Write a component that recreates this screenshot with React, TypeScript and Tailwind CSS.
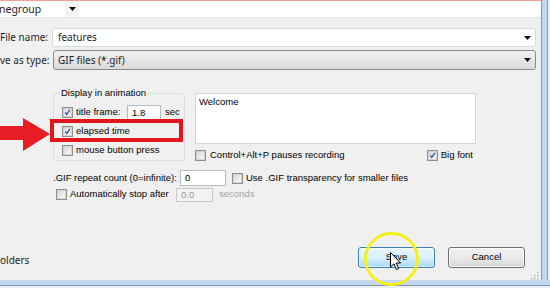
import React from 'react';

const Arrow = () => (
    <svg width="7" height="4" viewBox="0 0 7 4" className="shrink-0">
        <polygon points="0,0 7,0 3.5,4" fill="#111" />
    </svg>
);

const Check = ({ checked }: { checked?: boolean }) => (
    <span className="w-[11px] h-[11px] shrink-0 border border-[#8e8f8f] bg-[#f6f6f6] flex items-center justify-center">
        <span className="w-[9px] h-[9px] border border-[#d2d2d2] bg-gradient-to-br from-[#d9d9d9] to-[#f7f7f7] flex items-center justify-center">
            {checked && (
                <svg width="9" height="9" viewBox="0 0 9 9">
                    <path d="M1.6 4.4 L3.6 7 L7.6 1.2" fill="none" stroke="#2c4fa0" strokeWidth="1.5" />
                </svg>
            )}
        </span>
    </span>
);

const App: React.FC = () => {
    return (
        <div
            className="relative w-[550px] h-[288px] overflow-hidden bg-[#f0f0f0] flex flex-col text-black"
            style={{ fontFamily: '"Liberation Sans", Arial, sans-serif' }}
        >
            <div className="flex flex-1 min-h-0">
                <div className="flex-1 flex flex-col">
                    <div className="h-px bg-[#f0a292]" />
                    {/* address strip */}
                    <div className="h-[17px] bg-white border-b border-[#e6e6e6] flex font-['Noto_Sans',sans-serif] text-[10.5px] text-[#1e1e1e]">
                        <div className="w-[67px] leading-[16px] -ml-[1px]">negroup</div>
                        <div className="w-[12px] bg-[#f6f6f6] border-x border-[#ececec] flex items-center justify-center">
                            <Arrow />
                        </div>
                    </div>

                    {/* file name */}
                    <div className="mt-[10px] h-[19px] flex items-center font-['Noto_Sans',sans-serif] text-[10px] text-[#1e1e1e]">
                        <div className="w-[52px] pr-[4px] text-right whitespace-nowrap">File name:</div>
                        <div className="w-[484px] h-full bg-white border border-[#d9d9d9] rounded-[2px] flex items-center pl-[5px] pr-[4px]">
                            <span>features</span>
                            <span className="ml-auto"><Arrow /></span>
                        </div>
                    </div>

                    {/* save as type */}
                    <div className="mt-[3px] h-[20px] flex items-center font-['Noto_Sans',sans-serif] text-[10px] text-[#1e1e1e]">
                        <div className="w-[53px] pr-[5px] text-right whitespace-nowrap">ve as type:</div>
                        <div className="w-[483px] h-full border border-[#8a8a8a] rounded-[3px] bg-gradient-to-b from-[#f3f3f3] to-[#dadada] flex items-center pl-[4px] pr-[4px]">
                            <span>GIF files (*.gif)</span>
                            <span className="ml-auto"><Arrow /></span>
                        </div>
                    </div>

                    {/* options */}
                    <div className="mt-[17px] pl-[53px] flex items-start text-[9.5px]">
                        <fieldset className="w-[132px] border border-[#d5dfe5] rounded-[3px] pl-[8px]">
                            <legend className="ml-[-2px] px-[1px] leading-[12px]">Display in animation</legend>
                            <div className="mt-[4px] h-[19px] flex items-center">
                                <Check checked />
                                <span className="ml-[3px] w-[51px]">title frame:</span>
                                <div className="w-[34px] h-[15px] bg-white border border-[#b7bcc2] pl-[4px] leading-[13px]">1.8</div>
                                <span className="ml-[4px]">sec</span>
                            </div>
                            <div className="h-[19px] flex items-center">
                                <Check checked />
                                <span className="ml-[3px]">elapsed time</span>
                            </div>
                            <div className="h-[19px] flex items-center">
                                <Check />
                                <span className="ml-[3px]">mouse button press</span>
                            </div>
                        </fieldset>

                        <div className="ml-[10px] mt-[6px] w-[281px] flex flex-col">
                            <div className="h-[51px] bg-white border border-[#d3d7dc] pl-[3px] pt-[2px] leading-[12px]">Welcome</div>
                            <div className="mt-[6px] h-[11px] flex items-center justify-between">
                                <div className="flex items-center">
                                    <Check />
                                    <span className="ml-[4px]">Control+Alt+P pauses recording</span>
                                </div>
                                <div className="flex items-center pr-[3px]">
                                    <Check checked />
                                    <span className="ml-[3px]">Big font</span>
                                </div>
                            </div>
                        </div>
                    </div>

                    <div className="mt-[9px] pl-[53px] h-[16px] flex items-center text-[9.5px]">
                        <span className="w-[127px] whitespace-nowrap">.GIF repeat count (0=infinite):</span>
                        <div className="w-[46px] h-[16px] bg-white border border-[#b7bcc2] pl-[4px] leading-[14px]">0</div>
                        <span className="ml-[6px]"><Check /></span>
                        <span className="ml-[3px] whitespace-nowrap">Use .GIF transparency for smaller files</span>
                    </div>

                    <div className="mt-[1px] pl-[56px] h-[15px] flex items-center text-[9.5px]">
                        <Check />
                        <span className="ml-[3px] w-[106px] whitespace-nowrap">Automatically stop after</span>
                        <div className="w-[37px] h-[14px] bg-[#f3f3f3] border border-[#c9c9c9] pl-[4px] leading-[12px] text-[#9a9a9a]">0.0</div>
                        <span className="ml-[6px] text-[#a3a3a3]">seconds</span>
                    </div>

                    <div className="flex-1" />

                    {/* buttons */}
                    <div className="mb-[12px] h-[21px] flex items-center">
                        <span className="mt-[5px] font-['Noto_Sans',sans-serif] text-[10px] text-[#1e1e1e]">olders</span>
                        <div className="ml-auto mr-[16px] flex gap-[13px] text-[9.5px]">
                            <button className="w-[77px] h-[21px] rounded-[3px] border border-[#3c7fb1] bg-gradient-to-b from-[#eaf6fd] via-[#d9f0fc] to-[#a7d9f5] shadow-[inset_0_0_0_1px_rgba(255,255,255,0.6)]">
                                Save
                            </button>
                            <button className="w-[77px] h-[21px] rounded-[3px] border border-[#707070] bg-gradient-to-b from-[#f2f2f2] via-[#ebebeb] to-[#d6d6d6] shadow-[inset_0_0_0_1px_rgba(255,255,255,0.7)]">
                                Cancel
                            </button>
                        </div>
                    </div>
                </div>

                {/* right window frame */}
                <div className="w-[9px] flex">
                    <div className="w-px bg-[#7a98b8]" />
                    <div className="w-[5px] bg-[#c3d8ee]" />
                    <div className="w-px bg-[#8ea3ba]" />
                    <div className="w-[2px] bg-[#e9eef4]" />
                </div>
            </div>

            {/* bottom window frame */}
            <div className="h-[8px] flex flex-col">
                <div className="h-[5px] bg-[#c3d8ee]" />
                <div className="h-px bg-[#7f95ad]" />
                <div className="h-[2px] bg-[#e9eef4]" />
            </div>

            {/* resize grip */}
            <svg className="absolute left-[530px] top-[271px]" width="9" height="9" viewBox="0 0 9 9">
                {[[7, 1], [4, 4], [7, 4], [1, 7], [4, 7], [7, 7]].map(([x, y], i) => (
                    <rect key={i} x={x} y={y} width="1.5" height="1.5" fill="#b5b5b5" />
                ))}
            </svg>

            {/* annotation: red arrow + box */}
            <svg className="absolute left-0 top-[117px]" width="52" height="36" viewBox="0 0 52 36">
                <polygon points="0,9 23,9 23,1 50,17 23,34 23,23 0,23" fill="#e81c24" />
            </svg>
            <div className="absolute left-[50px] top-[119px] w-[133px] h-[23px] border-[4px] border-[#e4161d]" />

            {/* yellow highlight + cursor */}
            <div className="absolute left-[364px] top-[232px] w-[55px] h-[54px] rounded-full border-[3px] border-[#f5f018]" />
            <svg className="absolute left-[390px] top-[252px]" width="12" height="19" viewBox="0 0 12 19">
                <path d="M0.5 0.5 L0.5 15 L4 11.8 L6.4 17.5 L8.6 16.5 L6.2 11 L10.6 11 Z" fill="#fff" stroke="#000" strokeWidth="1" strokeLinejoin="round" />
            </svg>
        </div>
    );
};

export default App;
